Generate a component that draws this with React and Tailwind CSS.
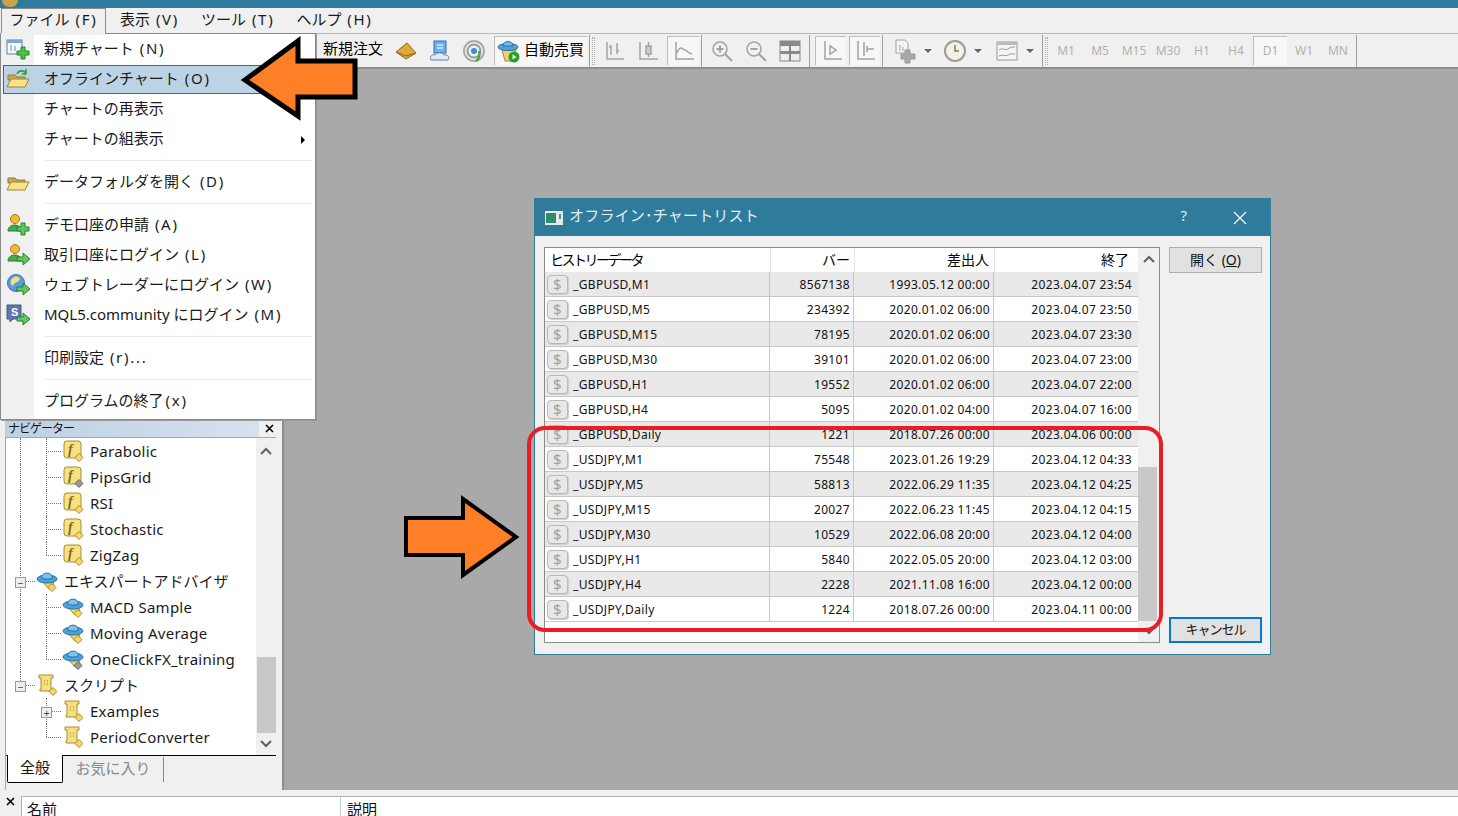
import React from "react";

const UI = { fontFamily: '"Noto Sans", "Noto Sans CJK JP", sans-serif' };

const Folder = ({ arrow }) => (
  <svg width="24" height="22" viewBox="0 0 24 22">
    <path d="M2 7h7l2 2h8v3H2z" fill="#c9a94a" stroke="#8d7a3c" />
    <path d="M1 19 L5 11 H23 L19 19 Z" fill="#fbe28a" stroke="#9a8440" />
    {arrow && <path d="M11 6 C13 2 17 2 20 5 M20 1 V6 H16" fill="none" stroke="#3c9a3c" strokeWidth="1.6" />}
  </svg>
);
const NewChart = () => (
  <svg width="24" height="22" viewBox="0 0 24 22">
    <rect x="1" y="2" width="15" height="14" fill="#f5f8fd" stroke="#5b7fb5" />
    <rect x="1" y="2" width="15" height="3" fill="#7da3d8" />
    <path d="M5 7v6M9 8v5" stroke="#789" />
    <path d="M15 9h4v4h4v4h-4v4h-4v-4h-4v-4h4z" fill="#4cc14c" stroke="#1f8a2a" />
  </svg>
);
const Person = ({ kind }) => (
  <svg width="24" height="24" viewBox="0 0 24 24">
    <circle cx="9" cy="6" r="4.5" fill="#f0b93a" stroke="#a67b1c" />
    <path d="M2 18 C2 10 15 10 16 18 Z" fill="#49a849" stroke="#2f7d2f" />
    {kind === "plus" ? (
      <path d="M15 10h4v4h4v4h-4v4h-4v-4h-4v-4h4z" fill="#5ec85e" stroke="#267f2e" />
    ) : (
      <path d="M11 14h6v-4l7 6-7 6v-4h-6z" fill="#5ec85e" stroke="#267f2e" />
    )}
  </svg>
);
const Globe = () => (
  <svg width="24" height="24" viewBox="0 0 24 24">
    <circle cx="10" cy="10" r="8.5" fill="#5b9bdc" stroke="#3a6ea8" />
    <path d="M5 7 C8 2 13 3 14 6 C12 10 8 9 7 13 C5 12 4 9 5 7Z" fill="#f1e27c" />
    <path d="M11 14h6v-4l7 6-7 6v-4h-6z" fill="#5ec85e" stroke="#267f2e" />
  </svg>
);
const SIcon = () => (
  <svg width="24" height="24" viewBox="0 0 24 24">
    <path d="M1 2h14v14H7l-3 3v-3H1z" fill="#5d76ad" stroke="#445a8c" />
    <text x="5" y="13" fontSize="11" fontWeight="700" fill="#fff" fontFamily="Liberation Sans, sans-serif">S</text>
    <path d="M11 14h6v-4l7 6-7 6v-4h-6z" fill="#5ec85e" stroke="#267f2e" />
  </svg>
);
const Diamond = ({ gray }) => (
  <path d="M16 13.5l4 4-4 4-4-4z" fill={gray ? "#9a9a9a" : "#f7d768"} stroke={gray ? "#666" : "#a98a2c"} />
);
const FIcon = ({ gray }) => (
  <svg width="21" height="22" viewBox="0 0 21 22">
    <rect x="1" y="1" width="17" height="17" rx="3" fill="#f7e27f" stroke="#a88a3c" />
    <text x="5" y="14" fontSize="14" fontStyle="italic" fontWeight="700" fill="#7a6a2a" fontFamily="Liberation Serif, serif">f</text>
    <Diamond gray={gray} />
  </svg>
);
const Hat = ({ gray }) => (
  <svg width="22" height="22" viewBox="0 0 22 22">
    <path d="M5 10h11l2 5-5 4z" fill="#f1d468" stroke="#a98a2c" />
    <ellipse cx="11" cy="9" rx="10" ry="4" fill="#4aa3dd" stroke="#2a6f9f" />
    <path d="M5.5 8 C5.5 1.5 16.5 1.5 16.5 8 C14 9.5 8 9.5 5.5 8 Z" fill="#7cc4ee" stroke="#2a6f9f" />
    <Diamond gray={gray} />
  </svg>
);
const Scroll = () => (
  <svg width="20" height="22" viewBox="0 0 20 22">
    <path d="M2 1h14v3h-2v11h2v2H3v-2h1V4H2z" fill="#f6e07c" stroke="#a88a3c" />
    <path d="M7 7h1M10 7h1M7 10h1M10 10h1" stroke="#8a7a3c" />
    <Diamond />
  </svg>
);
const Dollar = () => (
  <span className="w-[21px] h-[19px] rounded-[4px] bg-[#e8e8e8] border border-[#b8b8b8] shadow-[1px_1px_1px_#ccc] flex items-center justify-center text-[15px] leading-none text-[#a0a0a0] shrink-0">
    $
  </span>
);

const GIcon = ({ children }) => (
  <svg width="24" height="24" viewBox="0 0 24 24" fill="none" stroke="#a2a2a2" strokeWidth="1.5">{children}</svg>
);

/* The parenthesised accelerator is drawn wider than the font gives it. */
const Label = ({ text }) => {
  const i = text.lastIndexOf("(");
  if (i < 0) return <span>{text}</span>;
  return (
    <span>
      {text.slice(0, i)}
      <span className="ml-[2px] tracking-[1.7px]">{text.slice(i)}</span>
    </span>
  );
};

const MenuItem = ({ icon, label, active, arrow }) => (
  <div className="relative h-[30px] flex items-center">
    {active && <div className="absolute left-[2px] right-[1px] top-[1px] bottom-0 bg-[#bcd3e5] border border-[#0078d7]" />}
    <div className="relative w-[33px] flex justify-center shrink-0 pl-[1px]">{icon}</div>
    <span className="relative pl-[10px] pb-[2px] text-[15px] text-[#1a1a1a] whitespace-nowrap"><Label text={label} /></span>
    {arrow && <span className="absolute right-[10px] top-[12px] w-0 h-0 border-y-[4px] border-y-transparent border-l-[4px] border-l-black" />}
  </div>
);
const MenuSep = () => (
  <div className="h-[13px] flex items-center pl-[44px] pr-[3px]">
    <div className="h-px w-full bg-[#e8e8e8]" />
  </div>
);

const Tree = ({ indent, icon, label, jp, toggle, last, anc }) => (
  <div className="relative h-[26px] flex items-center shrink-0" style={{ paddingLeft: indent }}>
    <div className="w-[22px] flex justify-center shrink-0">{icon}</div>
    <span className={`pl-[6px] whitespace-nowrap text-[15px] text-[#1a1a1a] ${jp ? "" : "tracking-[0.25px]"}`}>{label}</span>
    <span className="absolute top-[13px] border-t border-dotted border-[#777]" style={{ left: indent - 16, width: 15 }} />
    <span
      className="absolute top-0 border-l border-dotted border-[#777]"
      style={{ left: indent - 16, height: last ? 13 : 26 }}
    />
    {anc && <span className="absolute top-0 left-[14px] h-[26px] border-l border-dotted border-[#777]" />}
    {toggle && (
      <span className="absolute top-[9px] w-[11px] h-[11px] bg-[#eee] border border-[#999] flex items-center justify-center text-[10px] leading-none text-[#335]" style={{ left: indent - 21 }}>
        {toggle}
      </span>
    )}
  </div>
);

const TB = ({ children, pressed, w = "w-[34px]", m = "" }) => (
  <div className={`${w} ${m} h-[29px] flex items-center justify-center shrink-0 ${pressed ? "bg-[#f7f7f7] border-l border-t border-[#bdbdbd]" : ""}`}>
    {children}
  </div>
);
const Sep = ({ grip }) => (
  <div className="flex items-center h-[32px] mx-[2px] gap-[2px] shrink-0">
    <div className="w-px h-full bg-[#a0a0a0]" />
    {grip && <div className="w-[3px] h-[28px] border-x border-dotted border-[#aaa]" />}
  </div>
);
const Caret = () => <span className="w-0 h-0 border-x-[4px] border-x-transparent border-t-[4px] border-t-[#666] ml-[4px] shrink-0" />;
const TF = ({ t, pressed }) => (
  <div className={`w-[34px] h-[29px] flex items-center justify-center text-[12px] text-[#b0b0b0] shrink-0 ${pressed ? "bg-[#f7f7f7] border-l border-t border-[#bdbdbd]" : ""}`}>
    {t}
  </div>
);
const CloseX = () => (
  <svg width="9" height="9" viewBox="0 0 9 9" className="shrink-0"><path d="M1 1l7 7M8 1L1 8" stroke="#000" strokeWidth="1.6" /></svg>
);

const rows = [
  ["_GBPUSD,M1", "8567138", "1993.05.12 00:00", "2023.04.07 23:54"],
  ["_GBPUSD,M5", "234392", "2020.01.02 06:00", "2023.04.07 23:50"],
  ["_GBPUSD,M15", "78195", "2020.01.02 06:00", "2023.04.07 23:30"],
  ["_GBPUSD,M30", "39101", "2020.01.02 06:00", "2023.04.07 23:00"],
  ["_GBPUSD,H1", "19552", "2020.01.02 06:00", "2023.04.07 22:00"],
  ["_GBPUSD,H4", "5095", "2020.01.02 04:00", "2023.04.07 16:00"],
  ["_GBPUSD,Daily", "1221", "2018.07.26 00:00", "2023.04.06 00:00"],
  ["_USDJPY,M1", "75548", "2023.01.26 19:29", "2023.04.12 04:33"],
  ["_USDJPY,M5", "58813", "2022.06.29 11:35", "2023.04.12 04:25"],
  ["_USDJPY,M15", "20027", "2022.06.23 11:45", "2023.04.12 04:15"],
  ["_USDJPY,M30", "10529", "2022.06.08 20:00", "2023.04.12 04:00"],
  ["_USDJPY,H1", "5840", "2022.05.05 20:00", "2023.04.12 03:00"],
  ["_USDJPY,H4", "2228", "2021.11.08 16:00", "2023.04.12 00:00"],
  ["_USDJPY,Daily", "1224", "2018.07.26 00:00", "2023.04.11 00:00"],
];

export default function App() {
  return (
    <div className="relative w-[1458px] h-[816px] overflow-hidden flex flex-col bg-[#a9a9a9]" style={UI}>
      {/* title strip */}
      <div className="h-[8px] bg-[#2e7b9b] relative shrink-0 overflow-hidden">
        <span className="absolute left-[2px] -top-[7px] w-[16px] h-[14px] rounded-full bg-[#c9a24a]" />
      </div>
      {/* menu bar */}
      <div className="h-[25px] bg-[#f0f0f0] flex items-center shrink-0 text-[15px] text-[#1a1a1a]">
        <div className="ml-px w-[105px] h-full pb-[3px] border-x border-t border-[#8a8a8a] flex items-center justify-center whitespace-nowrap"><Label text="ファイル (F)" /></div>
        <span className="ml-[14px] pb-[3px] whitespace-nowrap"><Label text="表示 (V)" /></span>
        <span className="ml-[22px] pb-[3px] whitespace-nowrap"><Label text="ツール (T)" /></span>
        <span className="ml-[22px] pb-[3px] whitespace-nowrap"><Label text="ヘルプ (H)" /></span>
      </div>
      {/* toolbar */}
      <div className="h-[36px] bg-[#f0f0f0] border-t border-[#b8b8b8] border-b-2 border-b-[#8e8e8e] flex items-center shrink-0 pl-[323px]">
        <span className="text-[15px] text-black w-[66px] shrink-0 pb-[4px] whitespace-nowrap">新規注文</span>
        <TB>
          <svg width="24" height="22" viewBox="0 0 24 22"><path d="M2 12L13 3l9 10-10 6z" fill="#e0a83a" stroke="#8a6a1e" /><path d="M2 12l10 4 10-3" fill="none" stroke="#8a6a1e" /></svg>
        </TB>
        <TB>
          <svg width="24" height="24" viewBox="0 0 24 24"><rect x="6" y="2" width="12" height="12" fill="#6fb2e8" stroke="#2f6fa8" /><path d="M9 6h6M9 9h6" stroke="#fff" /><path d="M3 21c-2-4 2-6 4-5 1-3 8-3 9 0 4-1 6 3 4 5z" fill="#dfeaf5" stroke="#5a7fa5" /></svg>
        </TB>
        <TB>
          <svg width="24" height="24" viewBox="0 0 24 24" fill="none"><circle cx="12" cy="12" r="10" stroke="#aaa" strokeWidth="2" /><circle cx="12" cy="12" r="6.5" stroke="#999" strokeWidth="2" /><circle cx="12" cy="12" r="3" fill="#3a8fd0" /><path d="M14 22c3-2 4-6 3-10" stroke="#49a849" strokeWidth="2.4" /></svg>
        </TB>
        <div className="w-[93px] h-[29px] ml-[3px] bg-[#f7f7f7] border-l border-t border-[#bdbdbd] flex items-center gap-[3px] pl-[2px] shrink-0">
          <svg width="24" height="24" viewBox="0 0 24 24" className="shrink-0"><path d="M5 11h14l-2 11H8z" fill="#ecd272" stroke="#a98a2c" /><ellipse cx="11" cy="8" rx="10" ry="3.6" fill="#4aa3dd" stroke="#2a6f9f" /><path d="M6 7C6 1 16 1 16 7z" fill="#6cbbea" stroke="#2a6f9f" /><circle cx="17" cy="18" r="5.5" fill="#2aa12a" /><path d="M15.5 15.5v5l4-2.5z" fill="#fff" /></svg>
          <span className="text-[15px] text-black whitespace-nowrap pb-[4px]">自動売買</span>
        </div>
        <Sep grip />
        <TB><GIcon><path d="M5 3v17h17M9 6v10M15 4v11" /><path d="M7 8h2M15 12h2" /></GIcon></TB>
        <TB><GIcon><path d="M4 3v17h18" /><rect x="10" y="7" width="5" height="8" fill="#ccc" /><path d="M12.5 3v4M12.5 15v3" /></GIcon></TB>
        <TB pressed w="w-[32px]" m="ml-[2px]"><GIcon><path d="M4 3v17h18M5 14c3-9 6-3 8-3s4 4 7 4" /></GIcon></TB>
        <Sep />
        <TB m="ml-[1px]"><GIcon><circle cx="10" cy="10" r="7" /><path d="M15 15l7 7M6.5 10h7M10 6.5v7" strokeWidth="2" /></GIcon></TB>
        <TB><GIcon><circle cx="10" cy="10" r="7" /><path d="M15 15l7 7M6.5 10h7" strokeWidth="2" /></GIcon></TB>
        <TB><svg width="22" height="22" viewBox="0 0 22 22"><rect x="1" y="1" width="20" height="20" fill="#eee" stroke="#888" /><rect x="1" y="1" width="20" height="5" fill="#8a8a8a" /><rect x="1" y="11" width="20" height="3" fill="#8a8a8a" /><path d="M11 1v20" stroke="#888" strokeWidth="2" /></svg></TB>
        <Sep />
        <TB pressed w="w-[31px]" m="ml-[3px]"><GIcon><path d="M6 2v18h17M11 7v8l6-4z" /></GIcon></TB>
        <TB pressed w="w-[31px]" m="ml-[3px]"><GIcon><path d="M5 2v18h17M11 3v14M21 10h-7M14 7v6" /></GIcon></TB>
        <Sep />
        <TB w="w-[30px]" m="ml-[5px]"><svg width="24" height="26" viewBox="0 0 24 26"><path d="M3 2h9l3 3v10H3z" fill="#f4f4f4" stroke="#a2a2a2" /><path d="M7 7v6M10 9v4" stroke="#a2a2a2" /><path d="M12 12h5v4h5v5h-5v4h-5v-4H8v-5h4z" fill="#a8a8a8" stroke="#999" /></svg></TB>
        <Caret />
        <TB w="w-[30px]" m="ml-[8px]"><svg width="24" height="24" viewBox="0 0 24 24"><circle cx="12" cy="12" r="10" fill="#f4f0e4" stroke="#9a9a9a" strokeWidth="2" /><path d="M12 6v6h4" stroke="#777" strokeWidth="1.5" fill="none" /></svg></TB>
        <Caret />
        <TB w="w-[30px]" m="ml-[10px]"><svg width="24" height="22" viewBox="0 0 24 22"><rect x="2" y="2" width="20" height="18" fill="#f5f5f5" stroke="#999" /><rect x="2" y="2" width="20" height="3" fill="#bbb" /><path d="M4 10c4-3 6 1 9-1s4-2 7-2M4 16c4-2 6 1 9-1s4-1 7-1" stroke="#999" fill="none" /></svg></TB>
        <Caret />
        <div className="w-[6px] shrink-0" />
        <Sep grip />
        <div className="flex items-center -ml-[1px]">
          <TF t="M1" /><TF t="M5" /><TF t="M15" /><TF t="M30" /><TF t="H1" /><TF t="H4" />
          <TF t="D1" pressed /><TF t="W1" /><TF t="MN" />
        </div>
        <div className="w-px h-[32px] bg-[#a0a0a0] ml-px" />
      </div>

      {/* workspace */}
      <div className="flex-1 min-h-0 flex flex-col justify-end">
        <div className="w-[284px] h-[371px] bg-[#f0f0f0] border-r-2 border-r-[#8e8e8e] border-t border-t-[#8e8e8e] pl-[5px] pr-[5px] flex flex-col shrink-0">
          <div className="h-[17px] flex items-center shrink-0">
            <div className="w-[254px] h-full bg-gradient-to-r from-[#bcd0e2] to-[#d6e2ee] text-[12px] tracking-[-1px] leading-[17px] text-[#111] pl-[3px]">ナビゲーター</div>
            <span className="flex-1 flex justify-center pl-[2px]"><CloseX /></span>
          </div>
          <div className="flex-1 min-h-0 bg-white border-l border-t border-[#a8a8a8] flex flex-col mr-[1px]">
            <div className="h-[317px] flex shrink-0">
              <div className="flex-1 min-w-0 flex flex-col overflow-hidden">
                <Tree indent={56} anc icon={<FIcon />} label="Parabolic" />
                <Tree indent={56} anc icon={<FIcon gray />} label="PipsGrid" />
                <Tree indent={56} anc icon={<FIcon />} label="RSI" />
                <Tree indent={56} anc icon={<FIcon />} label="Stochastic" />
                <Tree indent={56} anc icon={<FIcon />} label="ZigZag" last />
                <Tree indent={30} icon={<Hat />} label="エキスパートアドバイザ" jp toggle="−" />
                <Tree indent={56} anc icon={<Hat />} label="MACD Sample" />
                <Tree indent={56} anc icon={<Hat />} label="Moving Average" />
                <Tree indent={56} anc icon={<Hat gray />} label="OneClickFX_training" last />
                <Tree indent={30} icon={<Scroll />} label="スクリプト" jp toggle="−" last />
                <Tree indent={56} icon={<Scroll />} label="Examples" toggle="+" />
                <Tree indent={56} icon={<Scroll />} label="PeriodConverter" last />
              </div>
              <div className="w-[20px] bg-[#f0f0f0] flex flex-col items-center shrink-0 relative">
                <svg width="12" height="8" viewBox="0 0 12 8" className="mt-[9px]"><path d="M1 7l5-5 5 5" fill="none" stroke="#606060" strokeWidth="2" /></svg>
                <div className="w-[19px] h-[76px] bg-[#c8c8c8] mt-[202px]" />
                <svg width="12" height="8" viewBox="0 0 12 8" className="mt-[7px]"><path d="M1 1l5 5 5-5" fill="none" stroke="#606060" strokeWidth="2" /></svg>
              </div>
            </div>
            <div className="flex-1 bg-[#f0f0f0] border-t border-black flex items-start text-[15px]">
              <div className="w-[56px] h-[28px] ml-[1px] -mt-px pb-[2px] bg-white border-x border-b border-black rounded-b-[2px] flex items-center justify-center text-[#111]">全般</div>
              <div className="w-[101px] h-[25px] border-r border-[#888] flex items-center justify-center text-[#8a8a8a] mt-[1px] pb-[2px]">お気に入り</div>
            </div>
          </div>
        </div>
      </div>

      {/* bottom panel */}
      <div className="h-[26px] bg-[#f0f0f0] shrink-0 flex items-start pt-[6px]">
        <span className="w-[21px] flex justify-center pt-[1px]"><CloseX /></span>
        <div className="flex-1 h-full bg-white border-t border-l border-[#b4b4b4] flex items-start text-[15px] text-[#111] overflow-hidden">
          <span className="w-[319px] pl-[5px] border-r border-[#ccc] h-full leading-[24px]">名前</span>
          <span className="pl-[6px] leading-[24px]">説明</span>
        </div>
      </div>

      {/* file menu */}
      <div className="absolute left-0 top-[33px] w-[316px] h-[387px] bg-white border border-[#8a8a8a] shadow-[1px_1px_0_#999]">
        <div className="absolute left-0 top-0 bottom-0 w-[33px] bg-[#f0f0f0]" />
        <div className="absolute left-0 -top-[1px] w-[104px] h-[2px] bg-[#f0f0f0]" />
        <div className="relative">
          <MenuItem icon={<NewChart />} label="新規チャート (N)" />
          <MenuItem icon={<Folder arrow />} label="オフラインチャート (O)" active />
          <MenuItem label="チャートの再表示" />
          <MenuItem label="チャートの組表示" arrow />
          <MenuSep />
          <MenuItem icon={<Folder />} label="データフォルダを開く (D)" />
          <MenuSep />
          <MenuItem icon={<Person kind="plus" />} label="デモ口座の申請 (A)" />
          <MenuItem icon={<Person />} label="取引口座にログイン (L)" />
          <MenuItem icon={<Globe />} label="ウェブトレーダーにログイン (W)" />
          <MenuItem icon={<SIcon />} label="MQL5.community にログイン (M)" />
          <MenuSep />
          <MenuItem label="印刷設定 (r)..." />
          <MenuSep />
          <MenuItem label="プログラムの終了(x)" />
        </div>
      </div>

      {/* dialog */}
      <div className="absolute left-[534px] top-[198px] w-[737px] h-[457px] bg-[#f0f0f0] border border-[#2e7b9b] flex flex-col">
        <div className="h-[37px] bg-[#2e7b9b] flex items-center shrink-0 pl-[10px] pb-[5px] text-white">
          <svg width="18" height="14" viewBox="0 0 18 14" className="shrink-0 mt-[5px]"><rect width="18" height="14" fill="#e8e8e8" /><rect x="1" y="2" width="10" height="10" fill="#2f8a6a" /><rect x="14" y="3" width="2" height="5" fill="#4a8fa8" /></svg>
          <span className="ml-[6px] text-[15px] tracking-[0.2px] text-[#e4eef3]">オフライン･チャートリスト</span>
          <span className="ml-auto text-[15px] text-[#dfeaf0]">?</span>
          <svg width="14" height="14" viewBox="0 0 14 14" className="ml-[46px] mr-[23px] mt-[5px]"><path d="M1 1l12 12M13 1L1 13" stroke="#fff" strokeWidth="1.2" /></svg>
        </div>
        <div className="flex-1 min-h-0 flex pl-[9px] pt-[11px] pb-[11px]">
          {/* list */}
          <div className="w-[616px] h-full bg-white border border-[#8a8a8a] flex">
            <div className="w-[593px] flex flex-col shrink-0">
              <div className="h-[24px] flex items-center text-[14px] text-black shrink-0">
                <span className="w-[226px] h-full pl-[5px] border-r border-[#e4e4e4] leading-[24px] tracking-[-2.5px] whitespace-nowrap">ヒストリーデータ</span>
                <span className="w-[84px] h-full pr-[4px] text-right border-r border-[#e4e4e4] leading-[24px]">バー</span>
                <span className="w-[140px] h-full pr-[5px] text-right border-r border-[#e4e4e4] leading-[24px]">差出人</span>
                <span className="w-[141px] h-full pr-[7px] text-right leading-[24px]">終了</span>
              </div>
              {rows.map((r, i) => (
                <div key={r[0]} className={`h-[25px] flex items-center text-[12px] tracking-[0.35px] text-[#111] border-b border-[#c8c8c8] shrink-0 ${i % 2 === 0 ? "bg-[#e9e9e9]" : "bg-white"}`}>
                  <div className="w-[225px] h-full pl-[2px] flex items-center border-r border-[#c8c8c8] shrink-0">
                    <Dollar />
                    <span className="pl-[5px] pt-[1px]">{r[0]}</span>
                  </div>
                  <span className="w-[84px] h-full pr-[3px] text-right border-r border-[#c8c8c8] leading-[26px] shrink-0">{r[1]}</span>
                  <span className="w-[140px] h-full pr-[3px] text-right border-r border-[#c8c8c8] leading-[26px] shrink-0">{r[2]}</span>
                  <span className="w-[142px] h-full pr-[4px] text-right leading-[26px] shrink-0">{r[3]}</span>
                </div>
              ))}
            </div>
            <div className="flex-1 bg-[#f0f0f0] flex flex-col items-center relative">
              <svg width="12" height="8" viewBox="0 0 12 8" className="mt-[7px]"><path d="M1 7l5-5 5 5" fill="none" stroke="#606060" strokeWidth="2" /></svg>
              <div className="w-[19px] h-[154px] bg-[#c8c8c8] mt-[204px] mr-[2px]" />
              <svg width="10" height="7" viewBox="0 0 10 7" className="mt-[7px]"><path d="M1 1l4 4 4-4" fill="none" stroke="#606060" strokeWidth="2" /></svg>
            </div>
          </div>
          {/* buttons */}
          <div className="ml-[9px] w-[93px] flex flex-col justify-between">
            <button className="h-[26px] pb-[2px] bg-[#e1e1e1] border border-[#adadad] text-[14px] text-[#111]">開く (<span className="underline">O</span>)</button>
            <button className="h-[26px] bg-[#e1e1e1] border-2 border-[#0078d7] text-[13px] tracking-[-1px] text-[#111]">キャンセル</button>
          </div>
        </div>
      </div>

      {/* highlight */}
      <div className="absolute left-[527px] top-[426px] w-[636px] h-[206px] border-[4px] border-[#ed1c24] rounded-[18px]" />

      {/* arrows */}
      <svg className="absolute left-[235px] top-[30px]" width="130" height="100" viewBox="235 30 130 100">
        <path d="M245 80 L298 41 V61 H355 V97 H298 V116 Z" fill="#ff7f27" stroke="#000" strokeWidth="5" strokeLinejoin="miter" />
      </svg>
      <svg className="absolute left-[400px] top-[490px]" width="125" height="95" viewBox="400 490 125 95">
        <path d="M406 518 H463 V499 L516 537 L463 575 V555 H406 Z" fill="#ff7f27" stroke="#000" strokeWidth="4" strokeLinejoin="miter" />
      </svg>
    </div>
  );
}
